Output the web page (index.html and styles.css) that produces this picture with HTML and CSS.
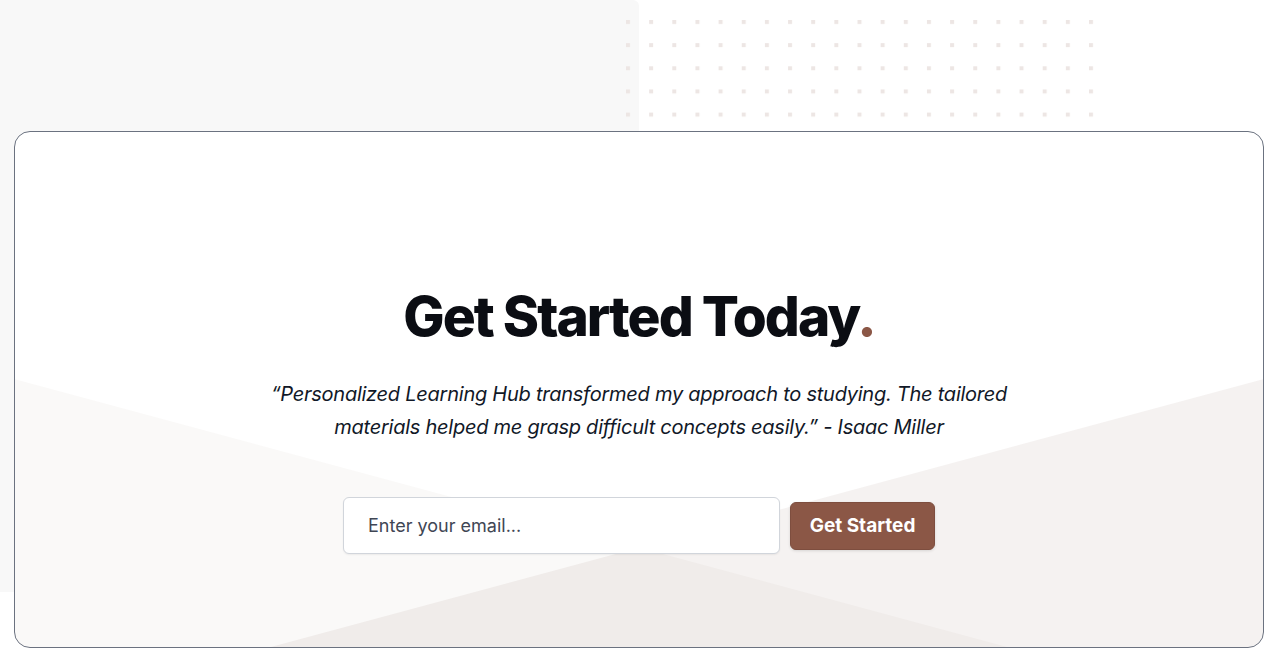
FILE: index.html
```html
<!DOCTYPE html>
<html lang="en">
<head>
<meta charset="utf-8">
<title>Get Started Today</title>
<link rel="stylesheet" href="styles.css">
</head>
<body>
<section class="cta">
  <div class="bg-panel"></div>
  <svg class="dots" width="470" height="100" aria-hidden="true">
    <defs>
      <pattern id="dotgrid" x="0" y="0" width="23.15" height="23.15" patternUnits="userSpaceOnUse">
        <rect x="0" y="0" width="4" height="4" fill="#ede6e4"></rect>
      </pattern>
    </defs>
    <rect width="470" height="100" fill="url(#dotgrid)"></rect>
  </svg>
  <div class="card">
    <div class="shape shape-left"></div>
    <div class="shape shape-right"></div>
    <div class="content">
      <h2 class="title">Get Started Today<span class="accent">.</span></h2>
      <p class="quote">“Personalized Learning Hub transformed my approach to studying. The tailored materials helped me grasp difficult concepts easily.” - Isaac Miller</p>
      <form class="signup" onsubmit="return false;">
        <input class="email" type="email" placeholder="Enter your email...">
        <button class="btn" type="submit">Get Started</button>
      </form>
    </div>
  </div>
</section>
</body>
</html>
```
FILE: styles.css
```css
* { box-sizing: border-box; }
html, body { margin: 0; padding: 0; background: #ffffff; }
body { font-family: Inter, "Noto Sans", sans-serif; color: #111827; }

.cta {
  position: relative;
  padding: 131px 16px 17px 14px;
}

.bg-panel {
  position: absolute;
  left: 0;
  top: 0;
  width: 639px;
  height: 592px;
  background: #f8f8f8;
  border-radius: 0 6px 0 0;
}

.dots {
  position: absolute;
  left: 626px;
  top: 20px;
  display: block;
}

.card {
  position: relative;
  height: 517px;
  border: 1px solid #6b7280;
  border-radius: 16px;
  background: #ffffff;
  overflow: hidden;
}

.shape {
  position: absolute;
  inset: 0;
}
.shape-left {
  background: rgba(130, 90, 75, 0.04);
  clip-path: polygon(0 48%, 79.5% 100%, 0 100%);
}
.shape-right {
  background: rgba(130, 90, 75, 0.08);
  clip-path: polygon(100% 48%, 100% 100%, 20.5% 100%);
}

.content {
  position: relative;
  display: flex;
  flex-direction: column;
  align-items: center;
  padding-top: 156px;
}

.title {
  margin: 0;
  font-size: 55px;
  line-height: 56px;
  font-weight: 800;
  letter-spacing: -0.036em;
  color: #0b0d13;
}
.accent { color: #8b5746; }

.quote {
  margin: 34px 0 0;
  width: 768px;
  text-align: center;
  font-size: 20px;
  line-height: 33px;
  font-style: italic;
  letter-spacing: -0.25px;
  color: #111827;
}

.signup {
  margin-top: 53px;
  display: flex;
  align-items: center;
  gap: 10px;
}

.email {
  width: 437px;
  height: 57px;
  padding: 0 24px;
  border: 1px solid #d1d5db;
  border-radius: 6px;
  background: #ffffff;
  font-family: Inter, "Noto Sans", sans-serif;
  font-size: 18px;
  color: #374151;
  box-shadow: 0 1px 2px rgba(0, 0, 0, 0.06);
  outline: none;
}
.email::placeholder { color: #3f4654; }

.btn {
  height: 48px;
  width: 145px;
  padding: 0;
  border: 1px solid #7e4e3f;
  border-radius: 6px;
  background: #8b5746;
  color: #ffffff;
  font-family: Inter, "Noto Sans", sans-serif;
  font-size: 19px;
  font-weight: 700;
  letter-spacing: 0;
  box-shadow: 0 1px 3px rgba(0, 0, 0, 0.12);
  cursor: pointer;
}
```
